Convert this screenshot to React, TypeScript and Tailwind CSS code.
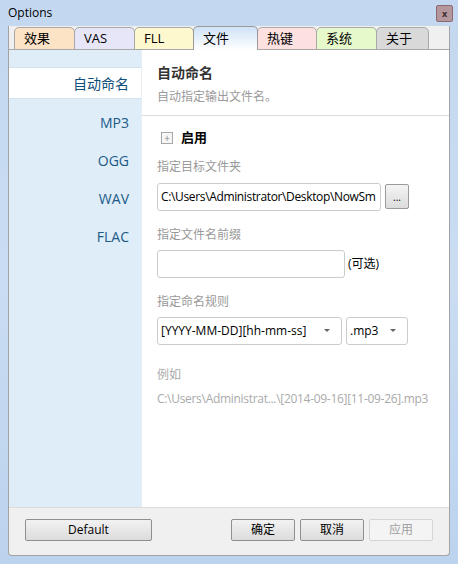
const font = { fontFamily: '"Open Sans", "Noto Sans CJK SC", sans-serif' }

const tabs = [
  { label: '效果', w: 'w-[61px]', bg: 'bg-[#fde3c5]' },
  { label: 'VAS', w: 'w-[61px]', bg: 'bg-[#e6e6f8]' },
  { label: 'FLL', w: 'w-[60px]', bg: 'bg-[#fdf8cd]' },
  { label: '文件', w: 'w-[65px]', bg: '', active: true },
  { label: '热键', w: 'w-[60px]', bg: 'bg-[#fde1e1]' },
  { label: '系统', w: 'w-[61px]', bg: 'bg-[#e6f9cb]' },
  { label: '关于', w: 'w-[53px]', bg: 'bg-[#d9d9d9]' },
]

const sideItems = ['MP3', 'OGG', 'WAV', 'FLAC']

function Button({ children, w, disabled }: { children: React.ReactNode; w: string; disabled?: boolean }) {
  return (
    <button
      className={`${w} h-[22px] rounded-[2px] border text-[12px] leading-none ${
        disabled
          ? 'border-[#d4d4d4] bg-[#f4f4f4] text-[#a0a0a0]'
          : 'border-[#8f8f8f] bg-gradient-to-b from-[#f2f2f2] to-[#dcdcdc] text-black'
      }`}
    >
      {children}
    </button>
  )
}

function Select({ value, w }: { value: string; w: string }) {
  return (
    <div className={`${w} flex h-[28px] items-center justify-between rounded-[3px] border border-[#cccccc] bg-white pl-[3px] pr-[11px] text-[12px] text-black`}>
      <span>{value}</span>
      <span className="h-0 w-0 border-x-[3px] border-t-[3px] border-x-transparent border-t-[#666]" />
    </div>
  )
}

export default function App() {
  return (
    <div style={font} className="h-[564px] w-[458px] overflow-hidden bg-gradient-to-b from-[#c3d8f0] via-[#c9dcf2] to-[#bcd3ee]">
      <div className="flex h-[26px] items-center justify-between pl-[8px] pr-[5px]">
        <span className="text-[12px] text-black">Options</span>
        <div className="flex h-[17px] w-[17px] items-center justify-center rounded-[2px] border border-[#8e6a70] bg-[#b4979c] text-[9px] font-bold leading-none text-[#3d2a2e]">
          x
        </div>
      </div>

      <div className="mx-[8px] flex h-[530px] flex-col overflow-hidden rounded-b-[4px] border-x border-b border-[#a3a3a3] bg-[#f0f0f0]">
        <div className="flex h-[24px] items-end bg-[#f0f0f0] pl-[5px]">
          {tabs.map((t) =>
            t.active ? (
              <div
                key={t.label}
                className={`${t.w} relative z-10 -mr-[1px] flex h-[24px] items-center rounded-t-[5px] border-x border-t border-[#9a9a9a] bg-gradient-to-b from-[#cfe2f6] to-white pl-[9px] text-[13px] text-black`}
              >
                {t.label}
              </div>
            ) : (
              <div
                key={t.label}
                className={`${t.w} ${t.bg} -mr-[1px] flex h-[23px] items-center rounded-t-[5px] border border-[#a8a8a8] pl-[9px] text-[13px] text-black`}
              >
                {t.label}
              </div>
            )
          )}
        </div>

        <div className="-mt-[1px] flex h-[458px] border-t border-[#a8a8a8] bg-white">
          <div className="w-[133px] shrink-0 border-r border-[#e8eef4] bg-[#deedf7] pt-[17px]">
            <div className="flex h-[32px] items-center justify-end border-y border-[#d3e2ee] bg-white pr-[12px] text-[14px] text-[#0e4e7a]">
              自动命名
            </div>
            <div className="mt-[4px]">
              {sideItems.map((s) => (
                <div key={s} className="flex h-[38px] items-center justify-end pr-[12px] text-[14px] text-[#1c5a88]">
                  {s}
                </div>
              ))}
            </div>
          </div>

          <div className="min-w-0 flex-1">
            <div className="h-[66px] border-b border-[#dcdcdc] pl-[15px] pt-[13px]">
              <div className="text-[14px] font-bold leading-[20px] text-[#333]">自动命名</div>
              <div className="mt-[6px] text-[12px] leading-[16px] text-[#9a9a9a]">自动指定输出文件名。</div>
            </div>

            <div className="pl-[15px] pr-[10px]">
              <div className="mt-[12px] flex items-center gap-[8px] pl-[4px]">
                <div className="flex h-[12px] w-[12px] items-center justify-center border border-[#a8a8a8] bg-[#f6f6f6] text-[10px] leading-none text-[#888]">
                  +
                </div>
                <span className="text-[13px] font-bold text-black">启用</span>
              </div>

              <div className="mt-[11px] text-[12px] leading-[16px] text-[#999]">指定目标文件夹</div>
              <div className="mt-[8px] flex items-center gap-[4px]">
                <div className="flex h-[28px] w-[224px] items-center overflow-hidden whitespace-nowrap rounded-[3px] border border-[#cccccc] pl-[3px] text-[12px] tracking-[-0.35px] text-black">
                  C:\Users\Administrator\Desktop\NowSm
                </div>
                <div className="flex h-[25px] w-[24px] items-center justify-center rounded-[2px] border border-[#9a9a9a] bg-gradient-to-b from-[#f4f4f4] to-[#dcdcdc] text-[10px] leading-none text-black">
                  ...
                </div>
              </div>

              <div className="mt-[16px] text-[12px] leading-[16px] text-[#999]">指定文件名前缀</div>
              <div className="mt-[7px] flex items-center gap-[3px]">
                <div className="h-[28px] w-[188px] rounded-[3px] border border-[#cccccc]" />
                <span className="text-[12px] text-black">(可选)</span>
              </div>

              <div className="mt-[16px] text-[12px] leading-[16px] text-[#999]">指定命名规则</div>
              <div className="mt-[7px] flex items-center gap-[4px]">
                <Select value="[YYYY-MM-DD][hh-mm-ss]" w="w-[185px]" />
                <Select value=".mp3" w="w-[62px]" />
              </div>

              <div className="mt-[22px] text-[12px] leading-[16px] text-[#aaa]">例如</div>
              <div className="mt-[8px] whitespace-nowrap text-[12px] leading-[16px] tracking-[-0.3px] text-[#aaa]">
                C:\Users\Administrat...\[2014-09-16][11-09-26].mp3
              </div>
            </div>
          </div>
        </div>

        <div className="flex flex-1 items-center border-t border-[#dcdcdc] pb-[4px] pl-[16px] pr-[16px]">
          <Button w="w-[127px]">Default</Button>
          <div className="ml-auto flex gap-[5px]">
            <Button w="w-[64px]">确定</Button>
            <Button w="w-[64px]">取消</Button>
            <Button w="w-[64px]" disabled>
              应用
            </Button>
          </div>
        </div>
      </div>
    </div>
  )
}
